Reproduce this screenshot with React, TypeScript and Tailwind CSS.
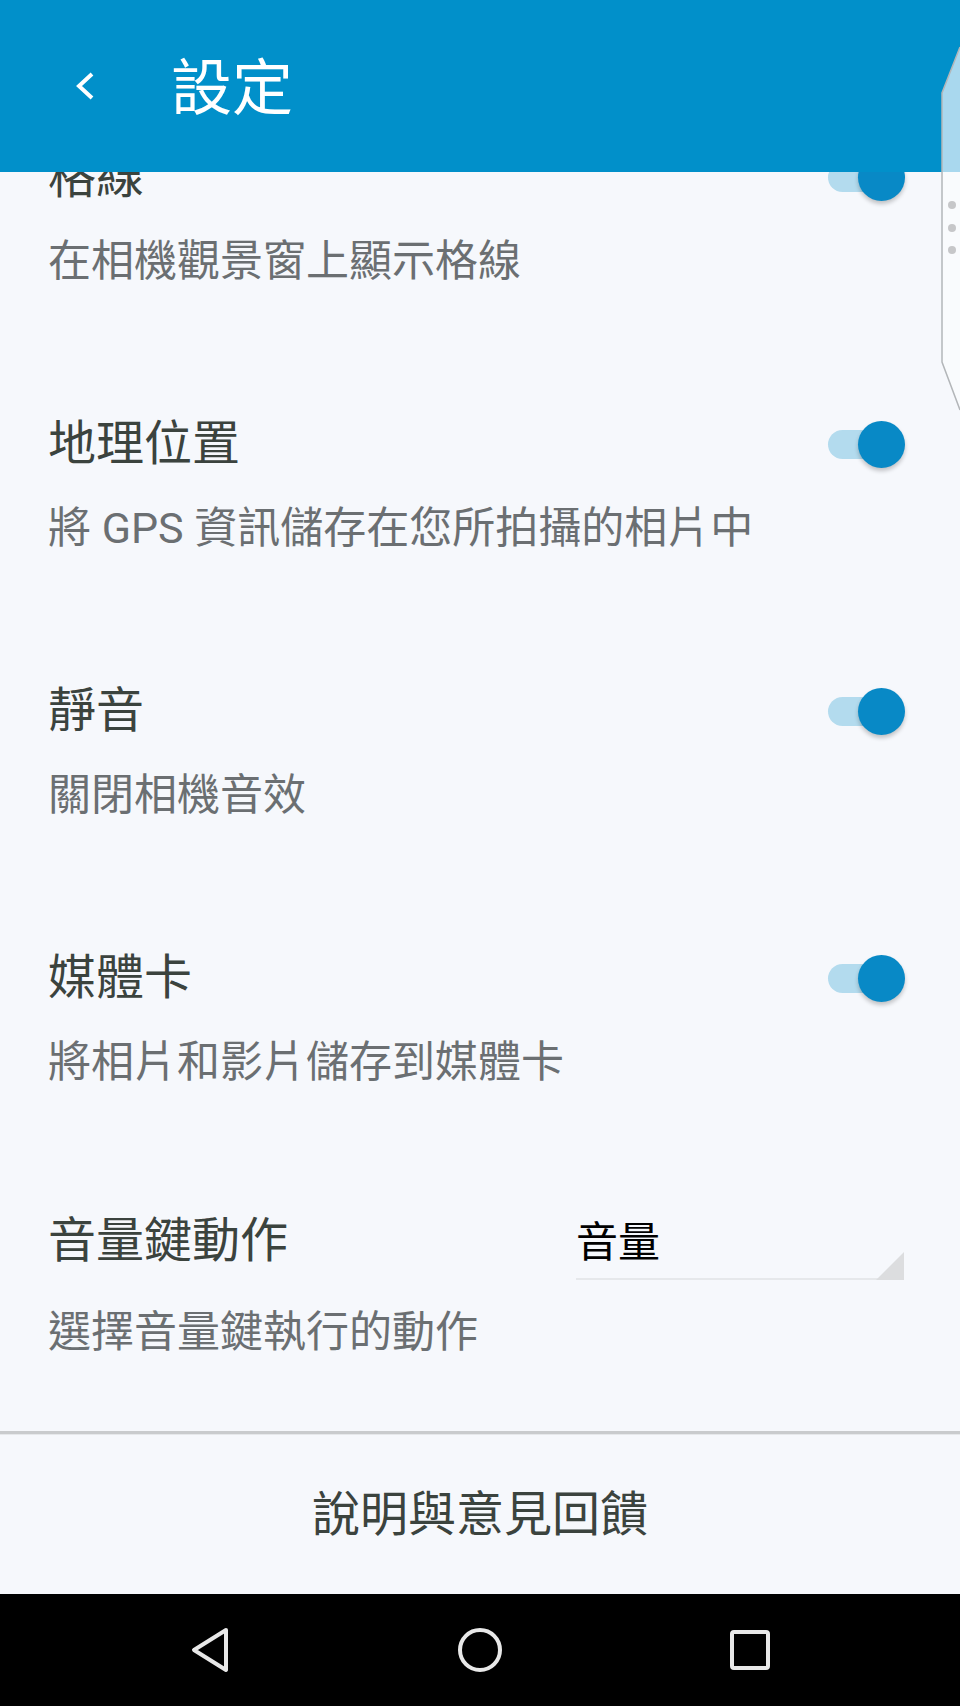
import type { ReactNode } from 'react';

type ToggleRow = {
    title: string;
    subtitle: string;
};

const toggleRows: ToggleRow[] = [
    { title: '格線', subtitle: '在相機觀景窗上顯示格線' },
    { title: '地理位置', subtitle: '將 GPS 資訊儲存在您所拍攝的相片中' },
    { title: '靜音', subtitle: '關閉相機音效' },
    { title: '媒體卡', subtitle: '將相片和影片儲存到媒體卡' },
];

function Switch() {
    return (
        <div className="relative mr-[7px] h-[47px] w-[77px] shrink-0">
            <div className="absolute top-[9px] left-0 h-[29px] w-[66px] rounded-full bg-[#b3dbee]" />
            <div className="absolute top-0 right-0 size-[47px] rounded-full bg-[#0889c6] shadow-[0_3px_4px_rgba(0,0,0,0.22)]" />
        </div>
    );
}

function SettingRow({
    title,
    subtitle,
    control,
}: {
    title: string;
    subtitle: string;
    control: ReactNode;
}) {
    return (
        <section className="h-[267px] px-[48px] pt-[60px]">
            <div className="flex h-[56px] items-center justify-between">
                <h2 className="text-[48px] leading-[56px] font-normal text-[#3b433e]">
                    {title}
                </h2>
                {control}
            </div>
            <p className="mt-[28px] text-[43px] leading-[56px] text-[#6b6f72]">
                {subtitle}
            </p>
        </section>
    );
}

function VolumeRow() {
    return (
        <section className="px-[48px] pt-[56px]">
            <div className="flex items-start justify-between">
                <h2 className="text-[48px] leading-[56px] font-normal text-[#3b433e]">
                    音量鍵動作
                </h2>
                <div className="relative mt-[2px] mr-[8px] w-[328px] border-b-2 border-[#e6e8eb] pb-[7px]">
                    <span className="text-[42px] leading-[56px] text-black">
                        音量
                    </span>
                    <svg
                        className="absolute right-0 bottom-[-2px]"
                        width="28"
                        height="28"
                        viewBox="0 0 28 28"
                    >
                        <polygon points="0,28 28,28 28,0" fill="#dcdddf" />
                    </svg>
                </div>
            </div>
            <p className="mt-[24px] text-[43px] leading-[56px] text-[#6b6f72]">
                選擇音量鍵執行的動作
            </p>
        </section>
    );
}

function EdgeHandle() {
    return (
        <svg
            className="pointer-events-none absolute top-0 right-0 z-20"
            width="22"
            height="420"
            viewBox="938 0 22 420"
        >
            <polygon points="960,47 942,93 942,172 960,172" fill="#a9d8ee" />
            <polygon points="942,172 942,362 960,410 960,172" fill="#f9fbfd" />
            <polyline
                points="960,47 942,93 942,362 960,410"
                fill="none"
                stroke="#b3b6b9"
                strokeWidth="1.5"
            />
            <circle cx="952" cy="205" r="4" fill="#c6c7c9" />
            <circle cx="952" cy="228" r="4" fill="#c6c7c9" />
            <circle cx="952" cy="250" r="4" fill="#c6c7c9" />
        </svg>
    );
}

function NavBar() {
    return (
        <nav className="flex h-[112px] shrink-0 items-center justify-center bg-black">
            <div className="flex w-[270px] justify-center">
                <svg width="40" height="46" viewBox="0 0 40 46">
                    <polygon
                        points="36,3 4,23 36,43"
                        fill="none"
                        stroke="#e8e8e8"
                        strokeWidth="4"
                        strokeLinejoin="round"
                    />
                </svg>
            </div>
            <div className="flex w-[270px] justify-center">
                <svg width="46" height="46" viewBox="0 0 46 46">
                    <circle
                        cx="23"
                        cy="23"
                        r="20"
                        fill="none"
                        stroke="#e8e8e8"
                        strokeWidth="4"
                    />
                </svg>
            </div>
            <div className="flex w-[270px] justify-center">
                <svg width="42" height="42" viewBox="0 0 42 42">
                    <rect
                        x="3"
                        y="3"
                        width="36"
                        height="36"
                        rx="2"
                        fill="none"
                        stroke="#e8e8e8"
                        strokeWidth="4"
                    />
                </svg>
            </div>
        </nav>
    );
}

export default function App() {
    return (
        <div className="relative flex h-[1706px] w-[960px] flex-col overflow-hidden bg-[#f6f8fc] font-[Roboto,'Noto_Sans_CJK_TC',sans-serif]">
            <header className="relative z-10 flex h-[172px] shrink-0 items-center bg-[#0190ca]">
                <svg
                    className="ml-[73px]"
                    width="24"
                    height="30"
                    viewBox="0 0 24 30"
                >
                    <polyline
                        points="19,3 6,15 19,27"
                        fill="none"
                        stroke="white"
                        strokeWidth="4"
                    />
                </svg>
                <h1 className="mt-[6px] ml-[74px] text-[61px] leading-none font-normal text-white">
                    設定
                </h1>
            </header>

            <main className="min-h-0 flex-1 overflow-hidden">
                <div className="-mt-[83px]">
                    {toggleRows.map((row) => (
                        <SettingRow
                            key={row.title}
                            title={row.title}
                            subtitle={row.subtitle}
                            control={<Switch />}
                        />
                    ))}
                    <VolumeRow />
                </div>
            </main>

            <footer className="shrink-0">
                <div className="h-[3px] bg-[#c9cbcd]" />
                <div className="h-px bg-[#e6e8eb]" />
                <button className="flex h-[159px] w-full items-center justify-center text-[48px] text-[#3b433e]">
                    說明與意見回饋
                </button>
            </footer>

            <NavBar />
            <EdgeHandle />
        </div>
    );
}
